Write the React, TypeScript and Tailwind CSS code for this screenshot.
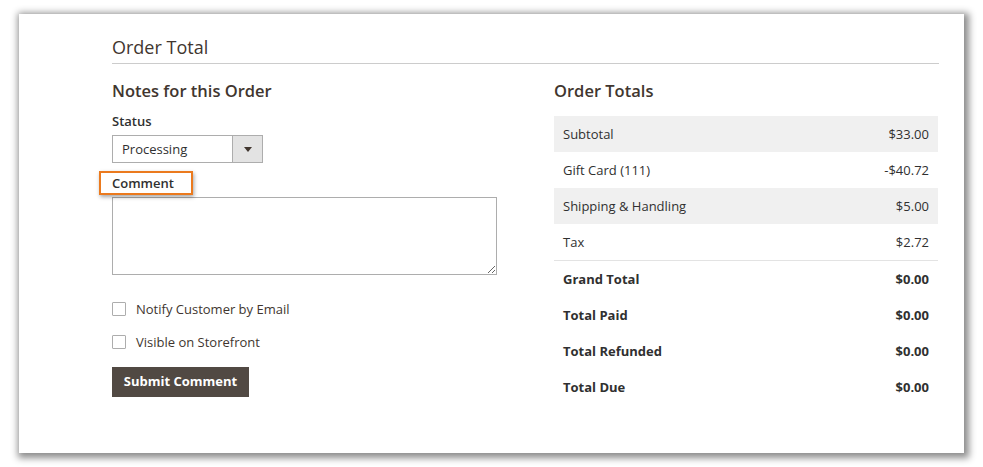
const rows = [
  { label: 'Subtotal', value: '$33.00', shaded: true },
  { label: 'Gift Card (111)', value: '-$40.72', shaded: false },
  { label: 'Shipping & Handling', value: '$5.00', shaded: true },
  { label: 'Tax', value: '$2.72', shaded: false },
]

const totals = [
  { label: 'Grand Total', value: '$0.00' },
  { label: 'Total Paid', value: '$0.00' },
  { label: 'Total Refunded', value: '$0.00' },
  { label: 'Total Due', value: '$0.00' },
]

function Checkbox({ label }: { label: string }) {
  return (
    <label className="flex items-center h-[14px] gap-[10px]">
      <span className="w-[14px] h-[14px] border border-[#adadad] rounded-[1px] bg-white shrink-0" />
      <span className="text-[13px] text-[#41362f] leading-[18px]">{label}</span>
    </label>
  )
}

export default function App() {
  return (
    <div className="min-h-screen bg-white pt-[14px] pl-[19px] font-['Open_Sans',sans-serif]">
      <div className="w-[945px] h-[439px] bg-white shadow-[2px_2px_7px_3px_rgba(0,0,0,0.45)] pt-[21px] pl-[93px] pr-[25px]">
        {/* Section title */}
        <h2 className="text-[18px] leading-[24px] pb-[4px] border-b border-[#cccccc] text-[#41362f] font-normal">
          Order Total
        </h2>

        <div className="flex gap-[57px] mt-[16px]">
          {/* Notes */}
          <div className="w-[385px] flex flex-col">
            <h3 className="text-[16.5px] leading-[22px] font-semibold text-[#41362f]">Notes for this Order</h3>

            <div className="mt-[10px] text-[13px] leading-[18px] font-semibold text-[#303030]">Status</div>
            <div className="mt-[5px] w-[151px] h-[28px] flex border border-[#adadad] bg-white">
              <span className="flex-1 pl-[9px] text-[13px] leading-[27px] text-[#303030]">Processing</span>
              <span className="w-[30px] border-l border-[#adadad] bg-[#e3e3e3] flex items-center justify-center">
                <svg width="8" height="5" viewBox="0 0 8 5">
                  <path d="M0 0h8L4 5z" fill="#41362f" />
                </svg>
              </span>
            </div>

            <div className="mt-[11px] relative self-start">
              <span className="block text-[13px] leading-[18px] font-semibold text-[#303030]">Comment</span>
              <span className="absolute left-[-13px] top-[-3px] w-[94px] h-[24px] border-[2.5px] border-[#eb7a1e] shadow-[1px_2px_4px_rgba(0,0,0,0.35)]" />
            </div>
            <textarea className="mt-[5px] w-[385px] h-[78px] border border-[#adadad] bg-white outline-none" />

            <div className="mt-[27px] flex flex-col gap-[19px]">
              <Checkbox label="Notify Customer by Email" />
              <Checkbox label="Visible on Storefront" />
            </div>

            <button className="mt-[18px] self-start w-[137px] h-[30px] bg-[#514943] text-white text-[13px] font-bold">
              Submit Comment
            </button>
          </div>

          {/* Totals */}
          <div className="w-[384px] flex flex-col">
            <h3 className="text-[16.5px] leading-[22px] font-semibold text-[#41362f]">Order Totals</h3>
            <div className="mt-[14px] text-[13px] text-[#303030]">
              {rows.map((r) => (
                <div
                  key={r.label}
                  className={`h-[36px] flex items-center justify-between px-[9px] pt-[2px] ${r.shaded ? 'bg-[#f0f0f0]' : ''}`}
                >
                  <span>{r.label}</span>
                  <span>{r.value}</span>
                </div>
              ))}
              <div className="border-t border-[#e3e3e3]" />
              {totals.map((r) => (
                <div key={r.label} className="h-[36px] flex items-center justify-between px-[9px] pt-[2px] font-bold">
                  <span>{r.label}</span>
                  <span>{r.value}</span>
                </div>
              ))}
            </div>
          </div>
        </div>
      </div>
    </div>
  )
}
